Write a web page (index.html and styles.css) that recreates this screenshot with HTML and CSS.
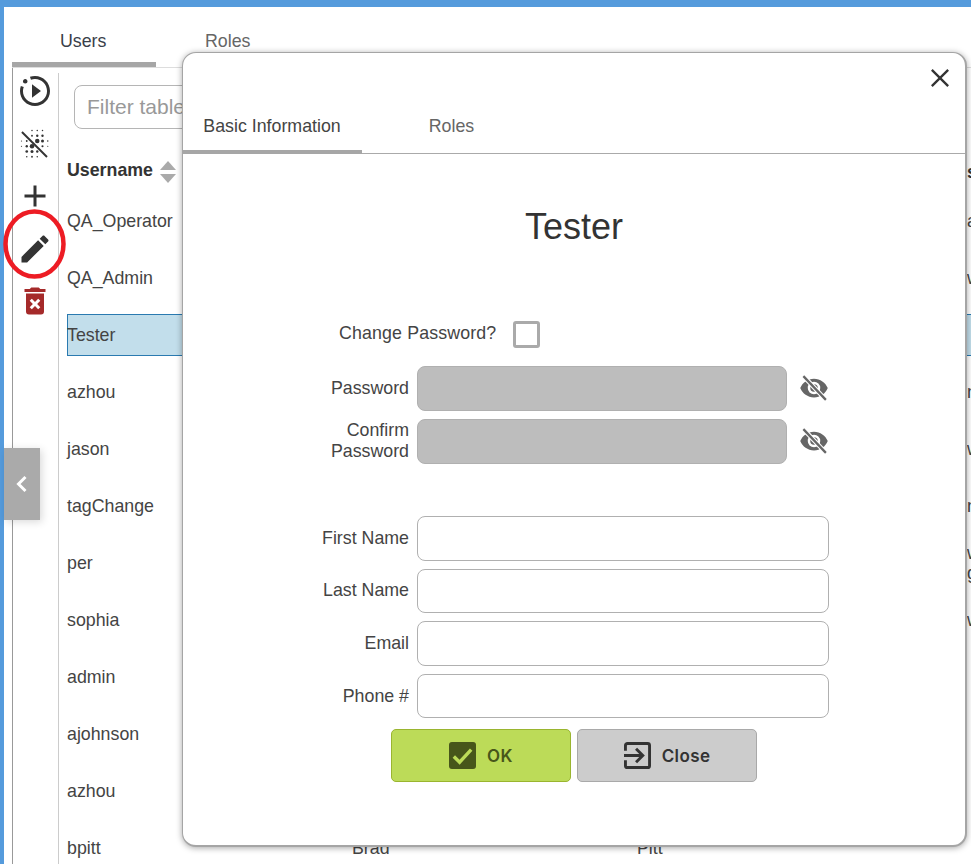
FILE: index.html
```html
<!DOCTYPE html>
<html lang="en">

<head>
    <meta charset="UTF-8">
    <title>Users</title>
    <link rel="stylesheet" href="styles.css">
</head>

<body>
    <div class="app">
        <div class="page-tabs">
            <div class="page-tab active">Users</div>
            <div class="page-tab">Roles</div>
        </div>

        <div class="panel">
            <div class="toolbar">
                <svg class="tool-icon" viewBox="0 0 24 24"><path d="M10 16.5V7.5L16 12M22 12C22 6.46 17.54 2 12 2C10.83 2 9.7 2.19 8.62 2.56L9.32 4.5C10.17 4.16 11.06 3.97 12 3.97C16.41 3.97 20.03 7.59 20.03 12C20.03 16.41 16.41 20.03 12 20.03C7.59 20.03 3.97 16.41 3.97 12C3.97 11.06 4.16 10.12 4.5 9.28L2.56 8.62C2.19 9.7 2 10.83 2 12C2 17.54 6.46 22 12 22C17.54 22 22 17.54 22 12M5.47 3.97C6.32 3.97 7 4.68 7 5.47C7 6.32 6.32 7 5.47 7C4.68 7 3.97 6.32 3.97 5.47C3.97 4.68 4.68 3.97 5.47 3.97Z"/></svg>
                <svg class="tool-icon" viewBox="0 0 24 24">
                    <circle cx="10" cy="3" r=".5"/><circle cx="13.5" cy="3" r=".5"/><circle cx="17" cy="3" r=".5"/>
                    <circle cx="10" cy="6.500" r=".6"/><circle cx="13.5" cy="6.500" r=".8"/><circle cx="17" cy="6.500" r=".8"/>
                    <circle cx="3" cy="10" r=".4"/><circle cx="6.5" cy="10" r=".6"/><circle cx="13.5" cy="10" r="1.500"/><circle cx="17" cy="10" r="1"/><circle cx="20.5" cy="10" r=".5"/>
                    <circle cx="3" cy="13.500" r=".4"/><circle cx="6.5" cy="13.500" r=".8"/><circle cx="10" cy="13.500" r="1.500"/><circle cx="17" cy="13.500" r=".7"/><circle cx="20.5" cy="13.500" r=".4"/>
                    <circle cx="6.5" cy="17" r=".9"/><circle cx="10" cy="17" r="1"/><circle cx="13.5" cy="17" r=".8"/>
                    <circle cx="6.5" cy="20.500" r=".5"/><circle cx="10" cy="20.500" r=".6"/><circle cx="13.5" cy="20.500" r=".5"/>
                    <path d="M3.300 4L20 20.700" stroke="#333" stroke-width="1.300"/>
                </svg>
                <svg class="tool-icon" viewBox="0 0 24 24"><path d="M19 13h-6v6h-2v-6H5v-2h6V5h2v6h6v2z"/></svg>
                <svg class="tool-icon" viewBox="0 0 24 24"><path d="M20.71,7.04C21.1,6.65 21.1,6 20.71,5.63L18.37,3.29C18,2.9 17.35,2.9 16.96,3.29L15.12,5.12L18.87,8.87M3,17.25V21H6.75L17.81,9.93L14.06,6.18L3,17.25Z"/></svg>
                <svg class="tool-icon delete" viewBox="0 0 24 24"><path d="M6,19A2,2 0 0,0 8,21H16A2,2 0 0,0 18,19V7H6V19M8.46,11.88L9.87,10.47L12,12.59L14.12,10.47L15.53,11.88L13.41,14L15.53,16.12L14.12,17.53L12,15.41L9.88,17.53L8.47,16.12L10.59,14L8.46,11.88M15.5,4L14.5,3H9.5L8.5,4H5V6H19V4H15.5Z"/></svg>
            </div>

            <div class="content">
                <input class="filter" type="text" placeholder="Filter table...">
                <div class="table">
                    <div class="row head">
                        <div class="cell">Username
                            <span class="sort"><i class="up"></i><i class="down"></i></span>
                        </div>
                        <div class="cell">First Name</div>
                        <div class="cell">Last Name</div>
                        <div class="cell">s</div>
                    </div>
                    <div class="row"><div class="cell">QA_Operator</div><div class="cell"></div><div class="cell"></div><div class="cell">a</div></div>
                    <div class="row"><div class="cell">QA_Admin</div><div class="cell"></div><div class="cell"></div><div class="cell">w</div></div>
                    <div class="row selected"><div class="cell">Tester</div><div class="cell"></div><div class="cell"></div><div class="cell"></div></div>
                    <div class="row"><div class="cell">azhou</div><div class="cell"></div><div class="cell"></div><div class="cell">n</div></div>
                    <div class="row"><div class="cell">jason</div><div class="cell"></div><div class="cell"></div><div class="cell">w</div></div>
                    <div class="row"><div class="cell">tagChange</div><div class="cell"></div><div class="cell"></div><div class="cell">n</div></div>
                    <div class="row"><div class="cell">per</div><div class="cell"></div><div class="cell"></div><div class="cell">w<br>g</div></div>
                    <div class="row"><div class="cell">sophia</div><div class="cell"></div><div class="cell"></div><div class="cell">w</div></div>
                    <div class="row"><div class="cell">admin</div><div class="cell"></div><div class="cell"></div><div class="cell"></div></div>
                    <div class="row"><div class="cell">ajohnson</div><div class="cell"></div><div class="cell"></div><div class="cell"></div></div>
                    <div class="row"><div class="cell">azhou</div><div class="cell"></div><div class="cell"></div><div class="cell"></div></div>
                    <div class="row"><div class="cell">bpitt</div><div class="cell">Brad</div><div class="cell">Pitt</div><div class="cell"></div></div>
                </div>
            </div>
        </div>
    </div>

    <!-- red circle drawn on the screenshot -->
    <svg class="annotation" viewBox="0 0 64 70"><ellipse cx="31.5" cy="35" rx="29" ry="32.500"/></svg>

    <div class="collapse-btn">
        <svg viewBox="0 0 24 24"><path d="M15.5 5L8.5 12L15.5 19"/></svg>
    </div>

    <div class="modal">
        <div class="modal-head">
            <svg class="close-x" viewBox="0 0 24 24"><path d="M5 5L19 19M19 5L5 19"/></svg>
            <div class="modal-tabs">
                <div class="modal-tab active">Basic Information</div>
                <div class="modal-tab">Roles</div>
            </div>
        </div>

        <h1 class="modal-title">Tester</h1>

        <div class="change-row">
            <label>Change Password?</label>
            <span class="checkbox"></span>
        </div>

        <div class="form-group">
            <div class="form-row tall">
                <label>Password</label>
                <input class="field short" type="password" disabled>
                <svg class="eye" viewBox="0 0 24 24"><use href="#eye-off"/></svg>
            </div>
            <div class="form-row tall">
                <label class="two-lines">Confirm<br>Password</label>
                <input class="field short" type="password" disabled>
                <svg class="eye" viewBox="0 0 24 24"><use href="#eye-off"/></svg>
            </div>
        </div>

        <div class="form-group names">
            <div class="form-row"><label>First Name</label><input class="field" type="text"></div>
            <div class="form-row"><label>Last Name</label><input class="field" type="text"></div>
            <div class="form-row"><label>Email</label><input class="field" type="text"></div>
            <div class="form-row"><label>Phone #</label><input class="field" type="text"></div>
        </div>

        <div class="actions">
            <button class="btn ok">
                <svg viewBox="0 0 28 28"><rect width="28" height="28" rx="3"/><path d="M5 15L11 21L23 8"/></svg>
                OK
            </button>
            <button class="btn cancel">
                <svg viewBox="0 0 28 28"><path d="M1.5 9V3.5A2 2 0 0 1 3.5 1.5H24.5A2 2 0 0 1 26.5 3.5V24.5A2 2 0 0 1 24.5 26.5H3.5A2 2 0 0 1 1.5 24.5V19M0 14H19M12.5 7L19.500 14L12.500 21"/></svg>
                Close
            </button>
        </div>
    </div>

    <svg class="defs" width="0" height="0">
        <symbol id="eye-off" viewBox="0 0 24 24">
            <path d="M12,9A3,3 0 0,0 9,12A3,3 0 0,0 12,15A3,3 0 0,0 15,12A3,3 0 0,0 12,9M12,17A5,5 0 0,1 7,12A5,5 0 0,1 12,7A5,5 0 0,1 17,12A5,5 0 0,1 12,17M12,4.5C7,4.5 2.73,7.61 1,12C2.73,16.39 7,19.5 12,19.5C17,19.5 21.27,16.39 23,12C21.27,7.61 17,4.5 12,4.5Z" fill="#666"/>
            <path d="M4.500 3.500L21 21" stroke="#fff" stroke-width="3.600"/>
            <path d="M3.500 2.500L21.500 21.500" stroke="#666" stroke-width="1.800"/>
        </symbol>
    </svg>
</body>
</html>
```

FILE: styles.css
```css
html, body {
    margin: 0;
    height: 100%;
    overflow: hidden;
}

body {
    position: relative;
    font-family: "Liberation Sans", Arial, sans-serif;
    font-size: 17.8px;
    color: #444;
    background: #fff;
}

.app {
    height: 100%;
    box-sizing: border-box;
    border-top: 7px solid #559bdc;
    border-left: 4px solid #559bdc;
}

/* page tabs */
.page-tabs {
    display: flex;
    height: 61px;
    margin-left: 8px;
    border-bottom: 1px solid #ddd;
    box-sizing: border-box;
}

.page-tab {
    width: 144px;
    padding-top: 24px;
    padding-left: 48px;
    box-sizing: border-box;
}

.page-tab.active {
    color: #3a3f4a;
    border-bottom: 5px solid #a6a6a6;
}

.page-tab:not(.active) {
    color: #666;
    padding-left: 49px;
}

.panel {
    display: flex;
    margin-left: 8px;
    border-left: 1px solid #999;
    height: 800px;
}

.toolbar {
    width: 43px;
    margin-top: 5px;
    display: flex;
    flex-direction: column;
    align-items: center;
    border-right: 1px solid #ccc;
    padding-right: 2px;
    gap: 16.5px;
    flex-shrink: 0;
}

.tool-icon {
    width: 36px;
    height: 36px;
    fill: #333;
}

.tool-icon.delete {
    fill: #a52a2a;
}

.content {
    padding-left: 8px;
    flex: 1;
    min-width: 0;
}

.filter {
    display: block;
    width: 400px;
    height: 44px;
    margin: 17px 0 0 7px;
    padding: 0 12px;
    box-sizing: border-box;
    font-family: inherit;
    font-size: 21px;
    border: 1px solid #b5b5b5;
    border-radius: 8px;
}

.filter::placeholder {
    color: #999;
}

.table {
    margin-top: 18px;
}

.row {
    display: grid;
    grid-template-columns: 285px 285px 330px 40px;
    height: 57px;
    align-items: center;
}

.row.head {
    height: 45px;
    padding-top: 4px;
    box-sizing: border-box;
    font-weight: bold;
    color: #333;
}

.cell {
    white-space: nowrap;
    line-height: 20px;
}

.row.selected {
    height: 42px;
    margin: 8px 0 7px;
    background: #c2deeb;
    box-shadow: inset 0 1px 0 #2a7ab0, inset 0 -1px 0 #2a7ab0, inset 1px 0 0 #2a7ab0;
    width: 912px;
}

.sort {
    display: inline-block;
    vertical-align: middle;
    margin-left: 2px;
}

.sort i {
    display: block;
    width: 0;
    height: 0;
    border-left: 8px solid transparent;
    border-right: 8px solid transparent;
}

.sort .up {
    border-bottom: 9px solid #aaa;
    margin-bottom: 4px;
}

.sort .down {
    border-top: 9px solid #aaa;
}

/* things lying over the page */
.annotation {
    position: absolute;
    left: 3px;
    top: 209px;
    width: 64px;
    height: 70px;
}

.annotation ellipse {
    fill: none;
    stroke: #ed1c24;
    stroke-width: 4.5px;
}

.collapse-btn {
    position: absolute;
    left: 4px;
    top: 448px;
    width: 36px;
    height: 72px;
    display: flex;
    align-items: center;
    justify-content: center;
    background: #aaa;
    box-shadow: 2px 2px 8px rgba(0, 0, 0, .15);
}

.collapse-btn svg {
    width: 24px;
    height: 24px;
    fill: none;
    stroke: #fff;
    stroke-width: 3px;
}

.modal {
    position: absolute;
    left: 182px;
    top: 52px;
    width: 785px;
    height: 795px;
    box-sizing: border-box;
    background: #fff;
    border: 1px solid #a5a5a5;
    border-right-width: 2px;
    border-bottom-width: 2px;
    border-radius: 14px;
    box-shadow: 0 1px 6px rgba(0, 0, 0, .35);
}

.modal-head {
    position: relative;
    height: 101px;
    border-bottom: 1px solid #aaa;
    box-sizing: border-box;
    display: flex;
    align-items: flex-end;
}

.close-x {
    position: absolute;
    right: 11px;
    top: 11px;
    width: 28px;
    height: 28px;
    fill: none;
    stroke: #333;
    stroke-width: 2px;
}

.modal-tabs {
    display: flex;
    margin-left: -1px;
}

.modal-tab {
    width: 179px;
    height: 48px;
    padding-top: 10px;
    box-sizing: border-box;
    text-align: center;
    color: #666;
    margin-bottom: -1px;
}

.modal-tab.active {
    width: 180px;
    color: #444;
    border-bottom: 4px solid #a6a6a6;
}

.modal-title {
    margin: 53px 0 0;
    height: 40px;
    line-height: 40px;
    text-align: center;
    font-size: 36px;
    font-weight: normal;
    color: #333;
}

.change-row {
    display: flex;
    align-items: center;
    gap: 17px;
    margin-top: 74px;
    padding-left: 156px;
    height: 27px;
}

.change-row label {
    letter-spacing: .13px;
    margin-bottom: 2px;
}

.checkbox {
    width: 27px;
    height: 27px;
    box-sizing: border-box;
    border: 3px solid #aaa;
    border-radius: 3px;
}

.form-group {
    display: flex;
    flex-direction: column;
    gap: 8px;
    margin-top: 18px;
}

.form-group.names {
    margin-top: 52px;
}

.form-row {
    display: flex;
    align-items: center;
    gap: 8px;
    height: 44.6px;
}

.form-row.tall {
    height: 45px;
}

.form-row label {
    width: 226px;
    text-align: right;
    line-height: 21px;
    box-sizing: border-box;
}

.form-row label.two-lines {
    margin-bottom: 2px;
}

.field {
    width: 412px;
    height: 100%;
    box-sizing: border-box;
    border: 1px solid #b0b0b0;
    border-radius: 8px;
    background: #fff;
    padding: 0 10px;
}

.field.short {
    width: 370px;
    background: #bdbdbd;
}

.eye {
    width: 30px;
    height: 30px;
    margin: 0 0 2px 4px;
}

.actions {
    display: flex;
    gap: 6px;
    margin: 11px 0 0 208px;
}

.btn {
    display: flex;
    align-items: center;
    justify-content: center;
    gap: 11px;
    width: 180px;
    height: 53px;
    padding: 0;
    box-sizing: border-box;
    font-family: Inter, sans-serif;
    font-size: 17px;
    font-weight: 600;
    letter-spacing: .4px;
    border-radius: 5px;
}

.btn svg {
    width: 27px;
    height: 27px;
}

.btn.ok {
    color: #47561a;
    background: #bcdb58;
    border: 1px solid #9ab52f;
}

.btn.ok rect {
    fill: #47561a;
}

.btn.ok path {
    fill: none;
    stroke: #bcdb58;
    stroke-width: 3.5px;
}

.btn.cancel {
    color: #333;
    background: #cccccc;
    border: 1px solid #a9a9a9;
}

.btn.cancel path {
    fill: none;
    stroke: #333;
    stroke-width: 3px;
}

.defs {
    position: absolute;
}
```
